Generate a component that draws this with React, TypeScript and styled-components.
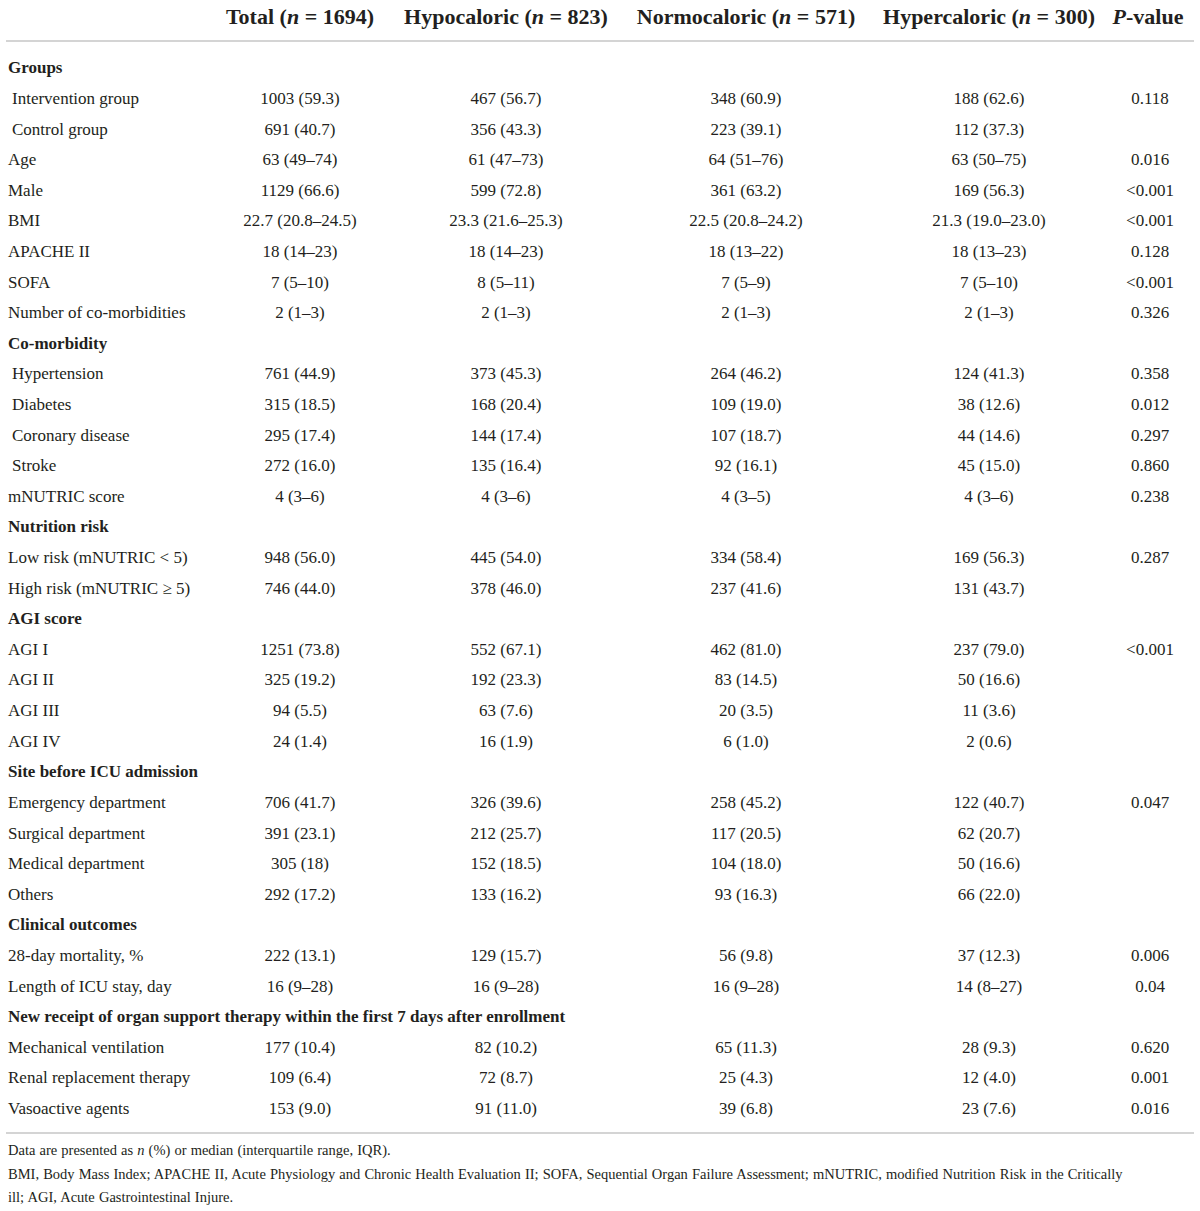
import styled, { createGlobalStyle } from "styled-components";

const GlobalStyle = createGlobalStyle`
  body {
    margin: 0;
    background: #fff;
    color: #231f20;
    font-family: "Liberation Serif", "DejaVu Serif", serif;
  }
`;

const Page = styled.div`
  width: 1200px;
  padding: 0 6px;
  box-sizing: border-box;
`;

const Table = styled.table`
  width: 1188px;
  border-collapse: collapse;
  table-layout: fixed;
`;

const HeadCell = styled.th`
  height: 34px;
  padding: 0 0 6px;
  font-size: 22px;
  font-weight: bold;
  text-align: center;
  white-space: nowrap;
  border-bottom: 2px solid #d4d4d4;
`;

const Row = styled.tr<{ $first?: boolean; $last?: boolean }>`
  td {
    height: 30.62px;
    padding: 0;
    font-size: 17px;
    vertical-align: middle;
    white-space: nowrap;
    ${(p) => (p.$first ? "padding-top: 11px;" : "")}
    ${(p) => (p.$last ? "padding-bottom: 8px; border-bottom: 2px solid #d4d4d4;" : "")}
  }
`;

const Label = styled.td<{ $indent?: boolean }>`
  text-align: left;
  padding-left: ${(p) => (p.$indent ? "6px" : "2px")} !important;
`;

const Section = styled.td`
  text-align: left;
  font-weight: bold;
  padding-left: 2px !important;
`;

const Value = styled.td`
  text-align: center;
`;

const PValue = styled.td`
  text-align: center;
  padding-left: 4px !important;
`;

const Notes = styled.div`
  padding: 5px 2px 0;
  font-size: 14.5px;
  line-height: 23.5px;
  word-spacing: 0.5px;
`;

type Item =
  | { section: string }
  | { label: string; indent?: boolean; v: [string, string, string, string, string] };

const rows: Item[] = [
  { section: "Groups" },
  { label: "Intervention group", indent: true, v: ["1003 (59.3)", "467 (56.7)", "348 (60.9)", "188 (62.6)", "0.118"] },
  { label: "Control group", indent: true, v: ["691 (40.7)", "356 (43.3)", "223 (39.1)", "112 (37.3)", ""] },
  { label: "Age", v: ["63 (49–74)", "61 (47–73)", "64 (51–76)", "63 (50–75)", "0.016"] },
  { label: "Male", v: ["1129 (66.6)", "599 (72.8)", "361 (63.2)", "169 (56.3)", "<0.001"] },
  { label: "BMI", v: ["22.7 (20.8–24.5)", "23.3 (21.6–25.3)", "22.5 (20.8–24.2)", "21.3 (19.0–23.0)", "<0.001"] },
  { label: "APACHE II", v: ["18 (14–23)", "18 (14–23)", "18 (13–22)", "18 (13–23)", "0.128"] },
  { label: "SOFA", v: ["7 (5–10)", "8 (5–11)", "7 (5–9)", "7 (5–10)", "<0.001"] },
  { label: "Number of co-morbidities", v: ["2 (1–3)", "2 (1–3)", "2 (1–3)", "2 (1–3)", "0.326"] },
  { section: "Co-morbidity" },
  { label: "Hypertension", indent: true, v: ["761 (44.9)", "373 (45.3)", "264 (46.2)", "124 (41.3)", "0.358"] },
  { label: "Diabetes", indent: true, v: ["315 (18.5)", "168 (20.4)", "109 (19.0)", "38 (12.6)", "0.012"] },
  { label: "Coronary disease", indent: true, v: ["295 (17.4)", "144 (17.4)", "107 (18.7)", "44 (14.6)", "0.297"] },
  { label: "Stroke", indent: true, v: ["272 (16.0)", "135 (16.4)", "92 (16.1)", "45 (15.0)", "0.860"] },
  { label: "mNUTRIC score", v: ["4 (3–6)", "4 (3–6)", "4 (3–5)", "4 (3–6)", "0.238"] },
  { section: "Nutrition risk" },
  { label: "Low risk (mNUTRIC < 5)", v: ["948 (56.0)", "445 (54.0)", "334 (58.4)", "169 (56.3)", "0.287"] },
  { label: "High risk (mNUTRIC ≥ 5)", v: ["746 (44.0)", "378 (46.0)", "237 (41.6)", "131 (43.7)", ""] },
  { section: "AGI score" },
  { label: "AGI I", v: ["1251 (73.8)", "552 (67.1)", "462 (81.0)", "237 (79.0)", "<0.001"] },
  { label: "AGI II", v: ["325 (19.2)", "192 (23.3)", "83 (14.5)", "50 (16.6)", ""] },
  { label: "AGI III", v: ["94 (5.5)", "63 (7.6)", "20 (3.5)", "11 (3.6)", ""] },
  { label: "AGI IV", v: ["24 (1.4)", "16 (1.9)", "6 (1.0)", "2 (0.6)", ""] },
  { section: "Site before ICU admission" },
  { label: "Emergency department", v: ["706 (41.7)", "326 (39.6)", "258 (45.2)", "122 (40.7)", "0.047"] },
  { label: "Surgical department", v: ["391 (23.1)", "212 (25.7)", "117 (20.5)", "62 (20.7)", ""] },
  { label: "Medical department", v: ["305 (18)", "152 (18.5)", "104 (18.0)", "50 (16.6)", ""] },
  { label: "Others", v: ["292 (17.2)", "133 (16.2)", "93 (16.3)", "66 (22.0)", ""] },
  { section: "Clinical outcomes" },
  { label: "28-day mortality, %", v: ["222 (13.1)", "129 (15.7)", "56 (9.8)", "37 (12.3)", "0.006"] },
  { label: "Length of ICU stay, day", v: ["16 (9–28)", "16 (9–28)", "16 (9–28)", "14 (8–27)", "0.04"] },
  { section: "New receipt of organ support therapy within the first 7 days after enrollment" },
  { label: "Mechanical ventilation", v: ["177 (10.4)", "82 (10.2)", "65 (11.3)", "28 (9.3)", "0.620"] },
  { label: "Renal replacement therapy", v: ["109 (6.4)", "72 (8.7)", "25 (4.3)", "12 (4.0)", "0.001"] },
  { label: "Vasoactive agents", v: ["153 (9.0)", "91 (11.0)", "39 (6.8)", "23 (7.6)", "0.016"] },
];

const App: React.FC = () => {
  return (
    <Page>
      <GlobalStyle />
      <Table>
        <colgroup>
          <col style={{ width: 198 }} />
          <col style={{ width: 192 }} />
          <col style={{ width: 220 }} />
          <col style={{ width: 260 }} />
          <col style={{ width: 226 }} />
          <col style={{ width: 92 }} />
        </colgroup>
        <thead>
          <tr>
            <HeadCell />
            <HeadCell>
              Total (<i>n</i> = 1694)
            </HeadCell>
            <HeadCell>
              Hypocaloric (<i>n</i> = 823)
            </HeadCell>
            <HeadCell>
              Normocaloric (<i>n</i> = 571)
            </HeadCell>
            <HeadCell>
              Hypercaloric (<i>n</i> = 300)
            </HeadCell>
            <HeadCell>
              <i>P</i>-value
            </HeadCell>
          </tr>
        </thead>
        <tbody>
          {rows.map((r, i) => (
            <Row key={i} $first={i === 0} $last={i === rows.length - 1}>
              {"section" in r ? (
                <Section colSpan={6}>{r.section}</Section>
              ) : (
                <>
                  <Label $indent={r.indent}>{r.label}</Label>
                  <Value>{r.v[0]}</Value>
                  <Value>{r.v[1]}</Value>
                  <Value>{r.v[2]}</Value>
                  <Value>{r.v[3]}</Value>
                  <PValue>{r.v[4]}</PValue>
                </>
              )}
            </Row>
          ))}
        </tbody>
      </Table>
      <Notes>
        Data are presented as <i>n</i> (%) or median (interquartile range, IQR).
        <br />
        BMI, Body Mass Index; APACHE II, Acute Physiology and Chronic Health Evaluation II; SOFA, Sequential Organ
        Failure Assessment; mNUTRIC, modified Nutrition Risk in the Critically
        <br />
        ill; AGI, Acute Gastrointestinal Injure.
      </Notes>
    </Page>
  );
};

export default App;
